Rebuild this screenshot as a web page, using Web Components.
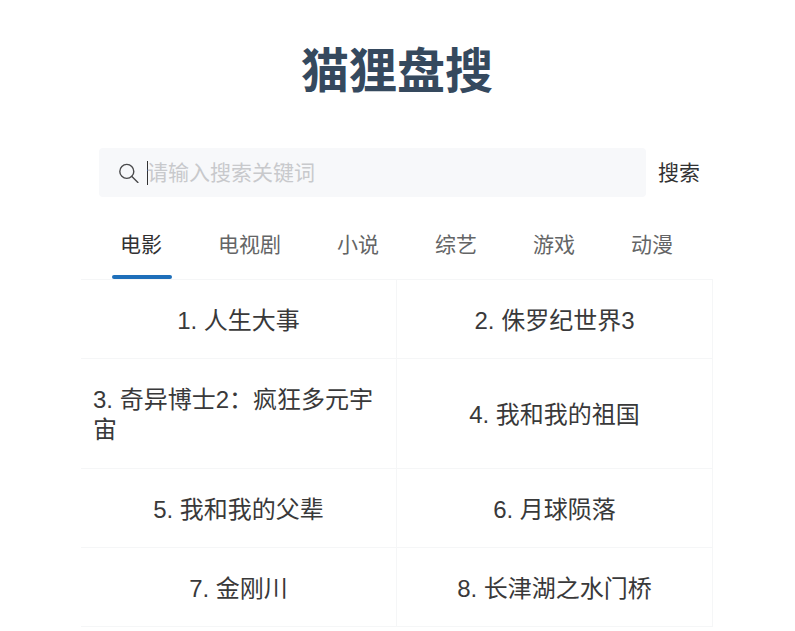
<!DOCTYPE html>
<html lang="zh">
<head>
<meta charset="utf-8">
<title>猫狸盘搜</title>
<style>
  html, body { margin: 0; padding: 0; background: #fff; height: 631px; overflow: hidden; }
  body { font-family: "Liberation Sans", "Noto Sans CJK SC", sans-serif; color: #333; }
</style>
</head>
<body>
<search-page></search-page>

<script>
class SearchBar extends HTMLElement {
  constructor() {
    super();
    this.attachShadow({ mode: 'open' });
    this.shadowRoot.innerHTML = `
      <style>
        :host { display: flex; align-items: center; height: 49px; padding: 0 0 0 18px; }
        .field {
          flex: none;
          width: 547px;
          height: 49px;
          box-sizing: border-box;
          display: flex;
          align-items: center;
          padding-left: 19px;
          background: #f7f8fa;
          border-radius: 4px;
        }
        svg { flex: none; width: 21px; height: 21px; margin-right: 8px; }
        .caret { flex: none; width: 1px; height: 24px; background: #323233; }
        .placeholder { margin-left: -1px; font-size: 21px; line-height: 28px; color: #c8c9cc; white-space: nowrap; }
        .action { margin-left: 12px; font-size: 21px; line-height: 28px; color: #323233; white-space: nowrap; }
      </style>
      <div class="field">
        <svg viewBox="0 0 21 21" fill="none" stroke="#4a4a4c" stroke-width="1.4" stroke-linecap="round">
          <circle cx="8.8" cy="9.4" r="7"/>
          <path d="M13.9 14.4l6 6"/>
        </svg>
        <span class="caret"></span>
        <span class="placeholder"><slot name="placeholder"></slot></span>
      </div>
      <span class="action"><slot name="action"></slot></span>
    `;
  }
}
customElements.define('search-bar', SearchBar);

class TabBar extends HTMLElement {
  static get observedAttributes() {
    return ['tabs'];
  }

  constructor() {
    super();
    this.attachShadow({ mode: 'open' });
  }

  connectedCallback() {
    this.render();
  }

  attributeChangedCallback() {
    this.render();
  }

  render() {
    const tabs = JSON.parse(this.getAttribute('tabs')) || [];
    this.shadowRoot.innerHTML = `
      <style>
        :host { display: flex; height: 82px; padding-left: 11px; }
        .tab {
          position: relative;
          flex: none;
          box-sizing: border-box;
          height: 82px;
          padding: 33px 28px 0;
          line-height: 30px;
          font-size: 21px;
          color: #646566;
          white-space: nowrap;
        }
        .tab.active { color: #323233; }
        .tab.active::after {
          content: '';
          position: absolute;
          left: 50%;
          bottom: 0;
          width: 60px;
          height: 4px;
          margin-left: -29px;
          border-radius: 4px;
          background: #1e6fba;
        }
      </style>
      ${tabs.map((tab, i) => `<div class="tab${i === 0 ? ' active' : ''}">${tab}</div>`).join('')}
    `;
  }
}
customElements.define('tab-bar', TabBar);

class ResultGrid extends HTMLElement {
  constructor() {
    super();
    this.attachShadow({ mode: 'open' });
    this.shadowRoot.innerHTML = `
      <style>
        :host {
          display: grid;
          grid-template-columns: 316px 316px;
          grid-template-rows: 79px 110px 79px 79px;
          width: 632px;
          border-top: 1px solid #f5f6f7;
        }
      </style>
      <slot></slot>
    `;
  }
}
customElements.define('result-grid', ResultGrid);

class ResultCell extends HTMLElement {
  constructor() {
    super();
    this.attachShadow({ mode: 'open' });
    this.shadowRoot.innerHTML = `
      <style>
        :host {
          display: flex;
          align-items: center;
          justify-content: center;
          box-sizing: border-box;
          padding: 3px 12px 0;
          font-size: 24px;
          line-height: 30px;
          color: #39393a;
          border-bottom: 1px solid #f5f6f7;
          border-right: 1px solid #f5f6f7;
        }
      </style>
      <div><slot></slot></div>
    `;
  }
}
customElements.define('result-cell', ResultCell);

class SearchPage extends HTMLElement {
  constructor() {
    super();
    this.attachShadow({ mode: 'open' });
    const movies = ['人生大事', '侏罗纪世界3', '奇异博士2：疯狂多元宇宙', '我和我的祖国', '我和我的父辈', '月球陨落', '金刚川', '长津湖之水门桥'];
    this.shadowRoot.innerHTML = `
      <style>
        :host { display: block; width: 632px; margin-left: 81px; }
        h1 {
          margin: 0 0 35px;
          padding-top: 37px;
          height: 76px;
          font-size: 48px;
          line-height: 70px;
          font-weight: 700;
          text-align: center;
          color: #35495e;
        }
      </style>
      <h1>猫狸盘搜</h1>
      <search-bar>
        <span slot="placeholder">请输入搜索关键词</span>
        <span slot="action">搜索</span>
      </search-bar>
      <tab-bar tabs='["电影","电视剧","小说","综艺","游戏","动漫"]'></tab-bar>
      <result-grid>
        ${movies.map((movie, i) => `<result-cell>${i + 1}. ${movie}</result-cell>`).join('')}
      </result-grid>
    `;
  }
}
customElements.define('search-page', SearchPage);
</script>
</body>
</html>
